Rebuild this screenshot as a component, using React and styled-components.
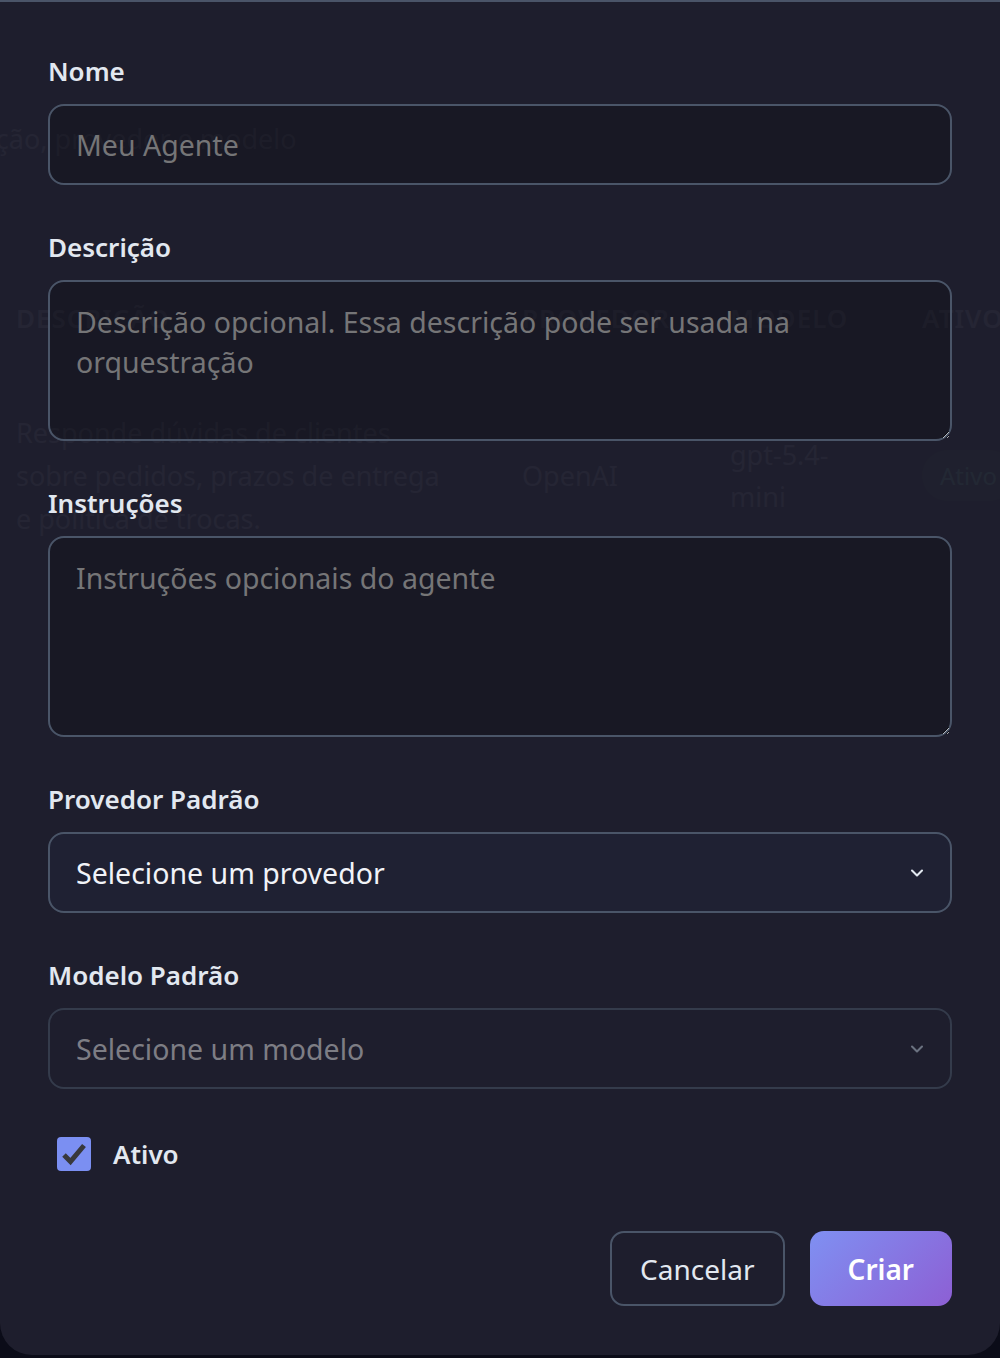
import styled, { createGlobalStyle } from "styled-components";
import { ChevronDown } from "lucide-react";

const GlobalStyle = createGlobalStyle`
  html, body {
    margin: 0;
    padding: 0;
    background: #0b0c18;
  }
  body {
    font-family: "Noto Sans", "Open Sans", sans-serif;
  }
  * { box-sizing: border-box; }
`;

const Page = styled.div`
  position: relative;
  width: 1000px;
  height: 1358px;
  overflow: hidden;
  background: #0b0c18;
  color: #9ca3af;
`;

/* page content that sits behind the dialog */
const Subtitle = styled.div`
  margin: 119px 0 0 -80px;
  font-size: 27px;
  line-height: 40px;
  white-space: nowrap;
`;

const Table = styled.div`
  display: grid;
  grid-template-columns: 506px 208px 192px 1fr;
  padding-left: 16px;
  margin-top: 139px;
`;

const HeadCell = styled.div`
  font-size: 26px;
  line-height: 40px;
  font-weight: 600;
  text-transform: uppercase;
  letter-spacing: 1px;
`;

const Cell = styled.div`
  margin-top: 73px;
  padding-right: ${(p) => p.pr || 0}px;
  font-size: 27px;
  line-height: ${(p) => p.lh || 43}px;
  align-self: center;
  white-space: ${(p) => (p.nowrap ? "nowrap" : "normal")};
`;

const Pill = styled.span`
  display: inline-block;
  padding: 4px 18px;
  border-radius: 999px;
  background: #1c3a2c;
  color: #6ee7b7;
  font-size: 24px;
`;

/* dialog */
const Modal = styled.div`
  position: absolute;
  top: 0;
  left: 0;
  right: 0;
  height: 1355px;
  padding: 50px 48px 0 48px;
  background: rgba(31, 31, 46, 0.955);
  border-top: 2px solid #4a5468;
  border-radius: 0 0 32px 32px;
`;

const Field = styled.div`
  margin-bottom: 43px;
`;

const Label = styled.label`
  display: block;
  margin-bottom: 13px;
  font-size: 26px;
  line-height: 39px;
  font-weight: 600;
  color: #e2e8f0;
`;

const fieldBox = `
  display: block;
  width: 100%;
  border: 2px solid #4a5568;
  border-radius: 16px;
  background: rgba(0, 0, 0, 0.2);
  color: #e2e8f0;
  font-family: "Noto Sans", "Open Sans", sans-serif;
  font-size: 28.5px;
  outline: none;
  &::placeholder { color: #757577; }
`;

const TextInput = styled.input`
  ${fieldBox}
  height: 81px;
  padding: 0 26px;
`;

const TextArea = styled.textarea`
  ${fieldBox}
  height: ${(p) => p.h}px;
  padding: 20px 26px;
  line-height: 40px;
  resize: vertical;
`;

const SelectBox = styled.button`
  display: flex;
  align-items: center;
  justify-content: space-between;
  width: 100%;
  height: 81px;
  padding: 0 26px;
  border-radius: 16px;
  border: 2px solid ${(p) => (p.disabled ? "#343b4b" : "#4a5568")};
  background: ${(p) => (p.disabled ? "transparent" : "#1f2133")};
  color: ${(p) => (p.disabled ? "#7d7d84" : "#f1f3f8")};
  font-family: "Noto Sans", "Open Sans", sans-serif;
  font-size: 28.5px;
  text-align: left;
  cursor: ${(p) => (p.disabled ? "not-allowed" : "pointer")};
  svg { margin-right: -3px; }
`;

const CheckRow = styled.label`
  display: flex;
  align-items: center;
  gap: 22px;
  margin: 47px 0 0 9px;
  font-size: 26px;
  font-weight: 600;
  color: #e2e8f0;
`;

const CheckBox = styled.span`
  display: grid;
  place-items: center;
  width: 34px;
  height: 34px;
  border-radius: 4px;
  background: #7b8ff2;
`;

const Footer = styled.div`
  display: flex;
  justify-content: flex-end;
  gap: 25px;
  margin-top: 59px;
`;

const Button = styled.button`
  height: 75px;
  padding: 0 ${(p) => (p.primary ? 38 : 28)}px;
  border-radius: 14px;
  font-family: "Noto Sans", "Open Sans", sans-serif;
  font-size: 28px;
  font-weight: ${(p) => (p.primary ? 600 : 400)};
  color: ${(p) => (p.primary ? "#ffffff" : "#e2e8f0")};
  border: ${(p) => (p.primary ? "none" : "2px solid #4a5568")};
  background: ${(p) =>
    p.primary ? "linear-gradient(135deg, #7f90f2 0%, #8d5fd4 100%)" : "transparent"};
  cursor: pointer;
`;

export default function App() {
  return (
    <Page>
      <GlobalStyle />
      <Subtitle>descrição, provedor e modelo</Subtitle>
      <Table>
        <HeadCell>Descrição</HeadCell>
        <HeadCell>Provedor</HeadCell>
        <HeadCell>Modelo</HeadCell>
        <HeadCell>Ativo</HeadCell>
        <Cell pr={76}>Responde dúvidas de clientes sobre pedidos, prazos de entrega e política de trocas.</Cell>
        <Cell>OpenAI</Cell>
        <Cell lh={42}>gpt-5.4-<br />mini</Cell>
        <Cell nowrap><Pill>Ativo</Pill></Cell>
      </Table>

      <Modal>
        <Field>
          <Label>Nome</Label>
          <TextInput placeholder="Meu Agente" />
        </Field>
        <Field>
          <Label>Descrição</Label>
          <TextArea h={161} placeholder="Descrição opcional. Essa descrição pode ser usada na orquestração" />
        </Field>
        <Field>
          <Label>Instruções</Label>
          <TextArea h={201} placeholder="Instruções opcionais do agente" />
        </Field>
        <Field>
          <Label>Provedor Padrão</Label>
          <SelectBox type="button">
            Selecione um provedor
            <ChevronDown size={20} strokeWidth={2.5} color="#e2e8f0" />
          </SelectBox>
        </Field>
        <div>
          <Label>Modelo Padrão</Label>
          <SelectBox type="button" disabled>
            Selecione um modelo
            <ChevronDown size={20} strokeWidth={2.5} color="#6b7280" />
          </SelectBox>
        </div>
        <CheckRow>
          <CheckBox>
            <svg width="28" height="28" viewBox="0 0 28 28">
              <path d="M4 15 L10.5 21.5 L24 5.5" fill="none" stroke="#38383c" strokeWidth="5" />
            </svg>
          </CheckBox>
          Ativo
        </CheckRow>
        <Footer>
          <Button type="button">Cancelar</Button>
          <Button type="button" primary>Criar</Button>
        </Footer>
      </Modal>
    </Page>
  );
}
